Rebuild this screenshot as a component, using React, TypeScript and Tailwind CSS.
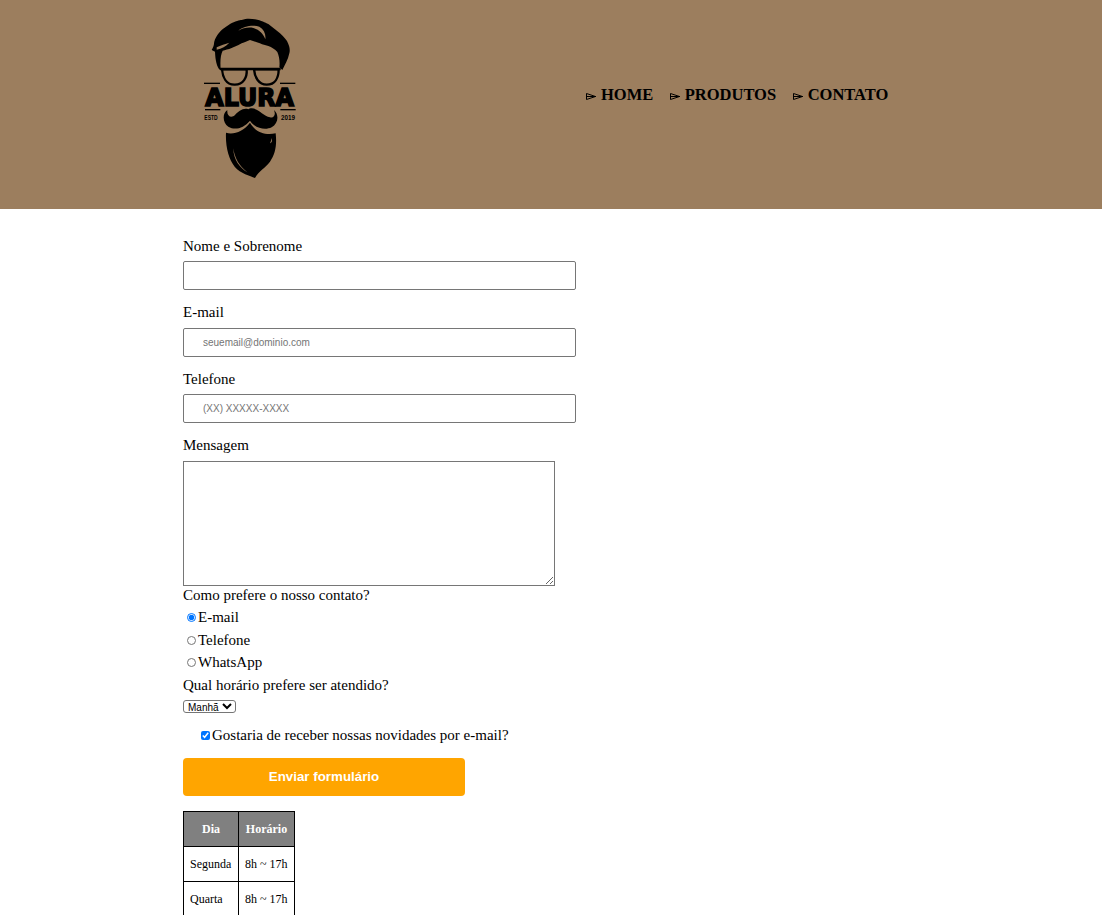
const serif = "font-['Liberation_Serif','Times_New_Roman',serif]";

function Logo() {
  return (
    <svg viewBox="0 0 300 525" className="w-[100px] h-[175px] shrink-0" fill="#000">
      {/* cabelo */}
      <path d="M60 180 C50 170 46 150 45 125 L35 120 C40 112 42 106 42 100 C44 85 55 70 65 60 C78 50 88 44 90 42 C105 34 120 30 125 30 C140 24 155 26 165 28 C185 32 195 38 205 42 L225 58 L240 70 C252 82 262 92 264 100 C270 112 270 125 268 130 C264 150 254 165 247 180 L238 172 C240 157 238 140 232 126 C225 118 215 112 205 108 C190 104 180 100 175 98 L150 90 C140 94 130 98 125 100 C112 108 100 112 95 114 C85 118 75 120 68 122 C62 134 60 150 62 180 Z" />
      <path d="M50 119 C65 116 78 109 88 98 C76 102 62 106 50 112 Z" fill="#9c7e5e" />
      <path d="M115 62 C130 48 160 44 178 50 C192 58 198 72 196 88 C190 70 176 58 160 54 C145 51 130 54 115 62 Z" fill="#9c7e5e" />
      {/* oculos */}
      <g fill="none" stroke="#000" strokeWidth="7">
        <path d="M66 178 L140 178 C142 202 130 225 103 224 C78 224 68 200 66 178 Z" />
        <path d="M162 178 L236 178 C236 202 226 224 200 224 C176 224 164 202 162 178 Z" />
        <path d="M60 177 L242 177" strokeWidth="8" />
      </g>
      {/* riscos e nome */}
      <rect x="12" y="218" width="48" height="4" />
      <rect x="240" y="218" width="46" height="4" />
      <text x="16" y="289" textLength="266" lengthAdjust="spacingAndGlyphs" fontFamily="'DejaVu Sans', sans-serif" fontWeight="900" fontSize="76" stroke="#000" strokeWidth="5">ALURA</text>
      <rect x="15" y="297" width="46" height="4" />
      <rect x="241" y="297" width="46" height="4" />
      <text x="13" y="331" textLength="40" lengthAdjust="spacingAndGlyphs" fontFamily="'Liberation Sans', sans-serif" fontWeight="700" fontSize="22">ESTD</text>
      <text x="243" y="331" textLength="42" lengthAdjust="spacingAndGlyphs" fontFamily="'Liberation Sans', sans-serif" fontWeight="700" fontSize="22">2019</text>
      {/* bigode */}
      <path d="M82 300 C66 310 68 340 85 350 C105 362 130 355 150 332 C165 355 195 362 215 352 C235 340 238 315 222 300 C228 315 222 325 210 322 C190 318 175 295 155 295 C150 295 148 296 145 298 C130 292 115 305 105 315 C95 325 80 320 82 300 Z" />
      {/* barba */}
      <path d="M78 368 C100 375 130 365 150 338 C165 365 195 378 227 370 C231 405 226 432 210 455 C198 472 175 484 165 504 C150 496 122 492 104 470 C86 446 76 410 78 368 Z" />
      <path d="M100 415 C104 445 118 468 142 487 C120 474 100 450 100 415 Z" fill="#9c7e5e" />
      <path d="M210 400 C214 392 214 388 213 384 C218 392 216 398 210 400 Z" fill="#9c7e5e" />
    </svg>
  );
}

function Seta() {
  return (
    <svg viewBox="0 0 10 7" className="w-[10px] h-[7px] mr-[5px] mt-[2px]" fill="none" stroke="#000" strokeWidth="1">
      <path d="M0.5 0.5 L9.5 3.5 L0.5 6.5 Z M0 3.5 L10 3.5" />
    </svg>
  );
}

const inputClass = "block w-[393px] h-[29px] border border-[#767676] rounded-[2px] pl-[19px] text-[10px] font-['Liberation_Sans',Arial,sans-serif] placeholder:text-[#757575]";

export default function App() {
  const menu = ["HOME", "PRODUTOS", "CONTATO"];
  return (
    <div className={`h-[915px] overflow-hidden bg-white text-black text-[15px] leading-[18px] ${serif}`}>
      <header className="flex items-start h-[209px] bg-[#9c7e5e] pl-[200px] pt-[10px]">
        <Logo />
        <nav className="flex items-center gap-[16.5px] ml-[286px] mt-[75px]">
          {menu.map((item) => (
            <a key={item} className="flex items-center text-[16.5px] leading-5 font-bold">
              <Seta />
              {item}
            </a>
          ))}
        </nav>
      </header>

      <form className="pl-[183px] pt-[28px]">
        <label className="block mb-[6px]">Nome e Sobrenome</label>
        <input type="text" className={inputClass} />
        <label className="block mt-[13px] mb-[7px]">E-mail</label>
        <input type="email" placeholder="seuemail@dominio.com" className={inputClass} />
        <label className="block mt-[13px] mb-[6px]">Telefone</label>
        <input type="tel" placeholder="(XX) XXXXX-XXXX" className={inputClass} />
        <label className="block mt-[13px] mb-[7px]">Mensagem</label>
        <textarea className="block w-[372px] h-[125px] border border-[#767676]" />

        <p>Como prefere o nosso contato?</p>
        <label className="flex items-center h-[18px] mt-[4px] ml-[4px]">
          <input type="radio" name="contato" defaultChecked className="mr-[2px] w-[9px] h-[9px]" />
          E-mail
        </label>
        <label className="flex items-center h-[18px] mt-[5px] ml-[4px]">
          <input type="radio" name="contato" className="mr-[2px] w-[9px] h-[9px]" />
          Telefone
        </label>
        <label className="flex items-center h-[18px] mt-[4px] ml-[4px]">
          <input type="radio" name="contato" className="mr-[2px] w-[9px] h-[9px]" />
          WhatsApp
        </label>
        <p className="mt-[5px]">Qual horário prefere ser atendido?</p>
        <select className="block mt-[6px] w-[53px] h-[13px] border border-[#767676] rounded-[3px] text-[10px] leading-none font-['Liberation_Sans',Arial,sans-serif]">
          <option>Manhã</option>
        </select>
        <label className="flex items-center h-[18px] mt-[13px] ml-[18px]">
          <input type="checkbox" defaultChecked className="mr-[2px] w-[9px] h-[9px]" />
          Gostaria de receber nossas novidades por e-mail?
        </label>
        <button type="button" className="block mt-[14px] w-[282px] h-[38px] rounded-[4px] bg-[#ffa500] text-white text-[13.33px] font-bold font-['Liberation_Sans',Arial,sans-serif]">
          Enviar formulário
        </button>

        <table className="mt-[15px] border-collapse text-xs">
          <thead>
            <tr className="h-[35px] bg-[#808080] text-white">
              <th className="w-[55px] border border-black font-bold">Dia</th>
              <th className="w-[56px] border border-black font-bold">Horário</th>
            </tr>
          </thead>
          <tbody>
            <tr className="h-[35px]">
              <td className="border border-black pl-[6px]">Segunda</td>
              <td className="border border-black pl-[6px]">8h ~ 17h</td>
            </tr>
            <tr className="h-[35px]">
              <td className="border border-black pl-[6px]">Quarta</td>
              <td className="border border-black pl-[6px]">8h ~ 17h</td>
            </tr>
          </tbody>
        </table>
      </form>
    </div>
  );
}
